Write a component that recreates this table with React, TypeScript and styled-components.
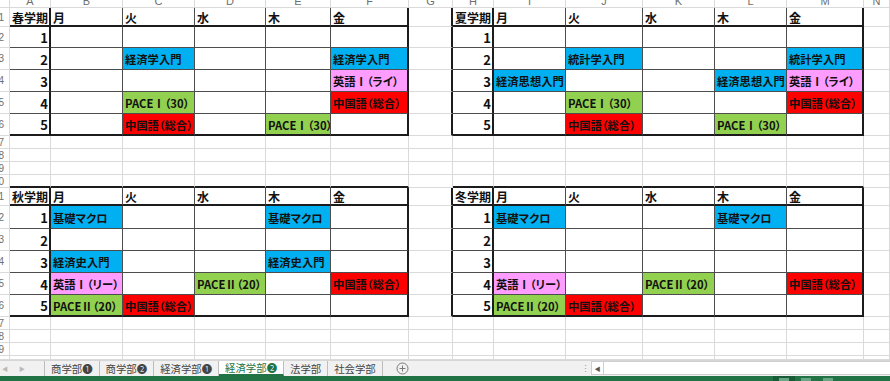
import React from 'react'
import styled, { createGlobalStyle } from 'styled-components'

type Edge = 'light' | 'thin' | 'thick'
type Fill = 'blue' | 'green' | 'red' | 'pink'
type Slot = [string, Fill] | null

const COLS = [10, 41, 72, 72, 71, 65, 78, 44, 41, 72, 77, 72, 72, 77, 26]
const ROWS = [8, 19, 21, 22, 22, 22, 22, 13, 13, 13, 13, 18, 23, 22, 22, 22, 22, 13, 13, 13, 4]
const LETTERS = ['', 'A', 'B', 'C', 'D', 'E', 'F', 'G', 'H', 'I', 'J', 'K', 'L', 'M', 'N']
const DAYS = ['月', '火', '水', '木', '金']

const FILLS: Record<Fill, string> = {
  blue: '#00b0f0',
  green: '#92d050',
  red: '#ff0000',
  pink: '#ff9cff',
}

const ECON: Slot = ['経済学入門', 'blue']
const STAT: Slot = ['統計学入門', 'blue']
const THOUGHT: Slot = ['経済思想入門', 'blue']
const MACRO: Slot = ['基礎マクロ', 'blue']
const HIST: Slot = ['経済史入門', 'blue']
const ENG_RAI: Slot = ['英語Ⅰ（ライ）', 'pink']
const ENG_RII: Slot = ['英語Ⅰ（リー）', 'pink']
const PACE1: Slot = ['PACEⅠ（30）', 'green']
const PACE2: Slot = ['PACEⅡ（20）', 'green']
const CHN: Slot = ['中国語（総合）', 'red']

type Term = { name: string; row: number; col: number; slots: Slot[][] }

const TERMS: Term[] = [
  {
    name: '春学期',
    row: 1,
    col: 1,
    slots: [
      [null, null, null, null, null],
      [null, ECON, null, null, ECON],
      [null, null, null, null, ENG_RAI],
      [null, PACE1, null, null, CHN],
      [null, CHN, null, PACE1, null],
    ],
  },
  {
    name: '夏学期',
    row: 1,
    col: 8,
    slots: [
      [null, null, null, null, null],
      [null, STAT, null, null, STAT],
      [THOUGHT, null, null, THOUGHT, ENG_RAI],
      [null, PACE1, null, null, CHN],
      [null, CHN, null, PACE1, null],
    ],
  },
  {
    name: '秋学期',
    row: 11,
    col: 1,
    slots: [
      [MACRO, null, null, MACRO, null],
      [null, null, null, null, null],
      [HIST, null, null, HIST, null],
      [ENG_RII, null, PACE2, null, CHN],
      [PACE2, CHN, null, null, null],
    ],
  },
  {
    name: '冬学期',
    row: 11,
    col: 8,
    slots: [
      [MACRO, null, null, MACRO, null],
      [null, null, null, null, null],
      [null, null, null, null, null],
      [ENG_RII, null, PACE2, null, CHN],
      [PACE2, CHN, null, null, null],
    ],
  },
]

const SHEETS = ['商学部❶', '商学部❷', '経済学部❶', '経済学部❷', '法学部', '社会学部']
const ACTIVE_SHEET = 3

const edge = (e: Edge) => {
  if (e === 'thick') return '2px solid #1c1c1c'
  if (e === 'thin') return '1px solid #4d4d4d'
  return '1px solid #dadada'
}

const termAt = (r: number, c: number) =>
  TERMS.find(t => r >= t.row && r < t.row + 6 && c >= t.col && c < t.col + 6)

const rightEdge = (r: number, c: number): Edge => {
  if (TERMS.some(t => r >= t.row && r < t.row + 6 && c === t.col - 1)) return 'thick'
  const t = termAt(r, c)
  if (!t) return 'light'
  const k = c - t.col
  return k === 0 || k === 5 ? 'thick' : 'thin'
}

const bottomEdge = (r: number, c: number): Edge => {
  if (TERMS.some(t => c >= t.col && c < t.col + 6 && r === t.row - 1)) return 'thick'
  const t = termAt(r, c)
  if (!t) return 'light'
  const j = r - t.row
  return j === 0 || j === 5 ? 'thick' : 'thin'
}

const GlobalStyle = createGlobalStyle`
  html, body {
    margin: 0;
    padding: 0;
    background: #ffffff;
    overflow: hidden;
  }
`

const Window = styled.div`
  width: 890px;
  height: 381px;
  display: flex;
  flex-direction: column;
  overflow: hidden;
  background: #ffffff;
`

const Sheet = styled.div`
  display: grid;
  grid-template-columns: ${COLS.map(w => `${w}px`).join(' ')};
  grid-template-rows: ${ROWS.map(h => `${h}px`).join(' ')};
  height: 360px;
  overflow: hidden;
`

const ColHead = styled.div`
  box-sizing: border-box;
  border-right: 1px solid #dadada;
  border-bottom: 1px solid #dadada;
  display: flex;
  align-items: flex-end;
  justify-content: center;
  overflow: hidden;
  font-family: 'Liberation Sans', Arial, sans-serif;
  font-size: 11px;
  line-height: 11px;
  color: #6f6f6f;
`

const RowHead = styled.div<{ $b: Edge }>`
  box-sizing: border-box;
  border-right: 1px solid #dadada;
  border-bottom: ${p => (p.$b === 'light' ? '1px solid #dadada' : edge(p.$b))};
  display: flex;
  align-items: center;
  justify-content: flex-end;
  padding-right: 5px;
  overflow: hidden;
  font-family: 'Liberation Sans', Arial, sans-serif;
  font-size: 10px;
  color: #6f6f6f;
`

const Cell = styled.div<{ $r: Edge; $b: Edge; $fill?: string; $kind?: 'head' | 'num' | 'body' }>`
  box-sizing: border-box;
  border-right: ${p => edge(p.$r)};
  border-bottom: ${p => edge(p.$b)};
  background: ${p => p.$fill ?? '#ffffff'};
  display: flex;
  align-items: center;
  justify-content: ${p => (p.$kind === 'num' ? 'flex-end' : 'flex-start')};
  padding: ${p => (p.$kind === 'num' ? '1px 1px 0 0' : '1px 0 0 2px')};
  overflow: hidden;
  white-space: nowrap;
  font-family: 'Noto Sans CJK JP', 'Noto Sans', sans-serif;
  font-feature-settings: 'palt';
  font-weight: 700;
  font-size: ${p => (p.$kind === 'num' ? '13px' : p.$kind === 'head' ? '12px' : '11.3px')};
  color: #111111;
`

const TabBar = styled.div`
  height: 16px;
  display: flex;
  align-items: stretch;
  background: #f1f1f1;
  border-top: 1px solid #d6d6d6;
  box-sizing: border-box;
  font-family: 'Noto Sans CJK JP', sans-serif;
`

const Nav = styled.div`
  width: 44px;
  display: flex;
  align-items: center;
  gap: 11px;
  padding-left: 2px;
  box-sizing: border-box;
  font-size: 6px;
  color: #b9b9b9;
`

const Tabs = styled.div`
  display: flex;
  border-left: 1px solid #bdbdbd;
`

const Tab = styled.div<{ $active?: boolean }>`
  display: flex;
  align-items: center;
  padding: 0 6px 0 6px;
  border-right: 1px solid #bdbdbd;
  box-sizing: border-box;
  font-size: 10.4px;
  color: ${p => (p.$active ? '#217346' : '#454545')};
  background: ${p => (p.$active ? '#ffffff' : 'transparent')};
  border-bottom: ${p => (p.$active ? '2px solid #217346' : '0')};
  white-space: nowrap;
`

const AddSheet = styled.div`
  margin-left: 13px;
  display: flex;
  align-items: center;
`

const Grip = styled.div`
  margin-left: auto;
  width: 12px;
  display: flex;
  align-items: center;
  justify-content: center;
  font-size: 9px;
  color: #9a9a9a;
`

const Scroller = styled.div`
  width: 298px;
  display: flex;
  align-items: stretch;
  border: 1px solid #cfcfcf;
  border-right: 0;
  background: #ffffff;
  margin: 0 0 1px 0;
`

const ScrollButton = styled.div`
  width: 11px;
  border-right: 1px solid #cfcfcf;
  display: flex;
  align-items: center;
  justify-content: center;
  font-size: 6px;
  color: #555555;
`

const StatusBar = styled.div`
  height: 5px;
  background: #217346;
  display: flex;
  padding-left: 773px;
`

const ViewButton = styled.div<{ $on?: boolean }>`
  width: 22px;
  display: flex;
  justify-content: center;
  background: ${p => (p.$on ? '#185c37' : 'transparent')};
  & > span {
    width: 10px;
    height: 3px;
    margin-top: 2px;
    background: #6aa685;
  }
`

const PlusIcon = () => (
  <svg width="13" height="13" viewBox="0 0 13 13">
    <circle cx="6.5" cy="6.5" r="5.5" fill="none" stroke="#7a7a7a" strokeWidth="1" />
    <path d="M6.5 3.5v6M3.5 6.5h6" stroke="#7a7a7a" strokeWidth="1" />
  </svg>
)

const renderCell = (r: number, c: number) => {
  const key = `${r}-${c}`
  if (r === 0) return <ColHead key={key}>{LETTERS[c]}</ColHead>
  if (c === 0) return <RowHead key={key} $b={bottomEdge(r, c)}>{r < 20 ? r : ''}</RowHead>

  const t = termAt(r, c)
  const right = rightEdge(r, c)
  const bottom = bottomEdge(r, c)
  if (!t) return <Cell key={key} $r={right} $b={bottom} />

  const j = r - t.row
  const k = c - t.col
  if (j === 0) {
    return (
      <Cell key={key} $r={right} $b={bottom} $kind="head">
        {k === 0 ? t.name : DAYS[k - 1]}
      </Cell>
    )
  }
  if (k === 0) {
    return (
      <Cell key={key} $r={right} $b={bottom} $kind="num">
        {j}
      </Cell>
    )
  }
  const slot = t.slots[j - 1][k - 1]
  return (
    <Cell key={key} $r={right} $b={bottom} $kind="body" $fill={slot ? FILLS[slot[1]] : undefined}>
      {slot ? slot[0] : ''}
    </Cell>
  )
}

export default function App() {
  return (
    <Window>
      <GlobalStyle />
      <Sheet>{ROWS.map((_, r) => COLS.map((__, c) => renderCell(r, c)))}</Sheet>

      <TabBar>
        <Nav>
          <span>◀</span>
          <span>▶</span>
        </Nav>
        <Tabs>
          {SHEETS.map((s, i) => (
            <Tab key={s} $active={i === ACTIVE_SHEET}>
              {s}
            </Tab>
          ))}
        </Tabs>
        <AddSheet>
          <PlusIcon />
        </AddSheet>
        <Grip>⋮</Grip>
        <Scroller>
          <ScrollButton>◀</ScrollButton>
        </Scroller>
      </TabBar>

      <StatusBar>
        <ViewButton $on>
          <span />
        </ViewButton>
        <ViewButton>
          <span />
        </ViewButton>
        <ViewButton>
          <span />
        </ViewButton>
      </StatusBar>
    </Window>
  )
}
